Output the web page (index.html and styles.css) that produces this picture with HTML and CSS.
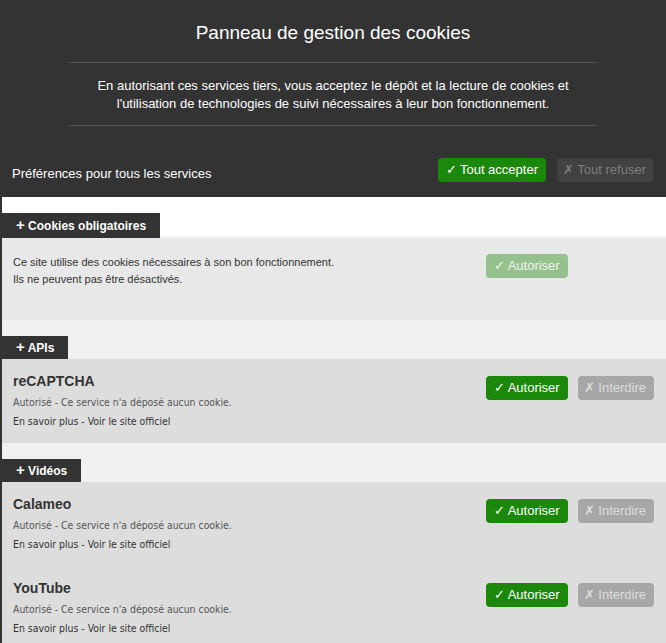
FILE: index.html
```html
<!DOCTYPE html>
<html lang="fr">
<head>
<meta charset="utf-8">
<title>Panneau de gestion des cookies</title>
<link rel="stylesheet" href="styles.css">
</head>
<body>
<div class="panel">
  <header class="top">
    <h1 class="title">Panneau de gestion des cookies</h1>
    <hr class="rule">
    <p class="intro">En autorisant ces services tiers, vous acceptez le dépôt et la lecture de cookies et l'utilisation de technologies de suivi nécessaires à leur bon fonctionnement.</p>
    <hr class="rule rule-bottom">
    <div class="prefs">
      <span class="prefs-label">Préférences pour tous les services</span>
      <div class="actions">
        <button class="btn btn-allow">✓ Tout accepter</button>
        <button class="btn btn-deny-dark">✗ Tout refuser</button>
      </div>
    </div>
  </header>

  <div class="services">
    <section class="category">
      <div class="cat-head cat-head-first"><span class="cat-title"><span class="plus">+</span> Cookies obligatoires</span></div>
      <div class="mandatory">
        <p class="mandatory-text">Ce site utilise des cookies nécessaires à son bon fonctionnement.<br>Ils ne peuvent pas être désactivés.</p>
        <div class="actions row-actions">
          <button class="btn btn-allow faded">✓ Autoriser</button>
          <button class="btn btn-deny hidden">✗ Interdire</button>
        </div>
      </div>
    </section>

    <section class="category">
      <div class="cat-head"><span class="cat-title"><span class="plus">+</span> APIs</span></div>
      <div class="service">
        <div class="service-info">
          <div class="service-name">reCAPTCHA</div>
          <div class="service-status">Autorisé - Ce service n'a déposé aucun cookie.</div>
          <div class="service-links">En savoir plus - Voir le site officiel</div>
        </div>
        <div class="actions row-actions">
          <button class="btn btn-allow">✓ Autoriser</button>
          <button class="btn btn-deny">✗ Interdire</button>
        </div>
      </div>
    </section>

    <section class="category">
      <div class="cat-head"><span class="cat-title"><span class="plus">+</span> Vidéos</span></div>
      <div class="service">
        <div class="service-info">
          <div class="service-name">Calameo</div>
          <div class="service-status">Autorisé - Ce service n'a déposé aucun cookie.</div>
          <div class="service-links">En savoir plus - Voir le site officiel</div>
        </div>
        <div class="actions row-actions">
          <button class="btn btn-allow">✓ Autoriser</button>
          <button class="btn btn-deny">✗ Interdire</button>
        </div>
      </div>
      <div class="service">
        <div class="service-info">
          <div class="service-name">YouTube</div>
          <div class="service-status">Autorisé - Ce service n'a déposé aucun cookie.</div>
          <div class="service-links">En savoir plus - Voir le site officiel</div>
        </div>
        <div class="actions row-actions">
          <button class="btn btn-allow">✓ Autoriser</button>
          <button class="btn btn-deny">✗ Interdire</button>
        </div>
      </div>
    </section>
  </div>
</div>
</body>
</html>
```

FILE: styles.css
```css
html, body {
  margin: 0;
  padding: 0;
  background: #ffffff;
}

body {
  font-family: "Liberation Sans", Arial, sans-serif;
  color: #333;
  overflow: hidden;
}

.panel {
  display: flex;
  flex-direction: column;
  width: 666px;
}

.top {
  background: #333333;
  color: #ffffff;
  display: flex;
  flex-direction: column;
  align-items: center;
  padding: 21px 0 15px;
}

.title {
  margin: 0;
  font-size: 19px;
  font-weight: normal;
  line-height: 24px;
  color: #ffffff;
}

.rule {
  width: 528px;
  height: 1px;
  border: 0;
  margin: 17px 0 0;
  background: #555555;
}

.rule-bottom {
  margin-top: 0;
}

.intro {
  margin: 14px 0 12px;
  width: 520px;
  text-align: center;
  font-size: 13px;
  line-height: 18px;
  color: #ffffff;
}

.prefs {
  align-self: stretch;
  display: flex;
  justify-content: space-between;
  align-items: flex-start;
  margin-top: 32px;
  padding: 0 13px 0 12px;
}

.prefs-label {
  font-size: 13px;
  line-height: 16px;
  margin-top: 8px;
}

.actions {
  display: flex;
  gap: 11px;
}

.btn {
  font-family: "Liberation Sans", Arial, sans-serif;
  font-size: 13px;
  line-height: 24px;
  height: 24px;
  padding: 0 8px;
  border: 0;
  border-radius: 4px;
  color: #ffffff;
  white-space: nowrap;
  cursor: pointer;
}

.btn-allow {
  background: #1b870b;
  color: #ffffff;
}

.btn-deny-dark {
  background: #414141;
  color: #7e7e7e;
  padding: 0 7px 0 6px;
}

.btn-deny {
  background: #a7a7a7;
  color: #dedede;
  padding: 0 8px 0 6px;
}

.faded {
  background: #96c18f;
  color: #eef5ec;
}

.hidden {
  visibility: hidden;
}

.services {
  display: flex;
  flex-direction: column;
  border-left: 2px solid #333333;
}

.category {
  display: flex;
  flex-direction: column;
}

.cat-head {
  background: #f0f0f0;
  padding-top: 16px;
  display: flex;
}

.cat-head-first {
  background: #ffffff;
  padding-top: 16px;
  box-shadow: inset 0 -2px 0 #f3f3f3;
}

.cat-title {
  background: #333333;
  color: #ffffff;
  font-weight: bold;
  font-size: 12px;
  line-height: 22px;
  padding: 0 14px 0 16px;
  margin-left: -2px;
}

.cat-head-first .cat-title {
  line-height: 23px;
}

.plus {
  font-size: 15px;
}

.mandatory {
  background: #e8e8e8;
  display: flex;
  justify-content: space-between;
  align-items: flex-start;
  padding: 16px 12px 32px 11px;
}

.mandatory-text {
  margin: 0;
  font-size: 11px;
  line-height: 17px;
  color: #333;
}

.row-actions {
  gap: 10px;
}

.service {
  background: #dddddd;
  display: flex;
  justify-content: space-between;
  align-items: flex-start;
  padding: 13px 12px 15px 11px;
}

.service .row-actions {
  margin-top: 4px;
}

.service-info {
  display: flex;
  flex-direction: column;
}

.service-name {
  font-size: 14px;
  font-weight: bold;
  line-height: 18px;
  color: #333;
}

.service-status {
  font-family: "DejaVu Sans Condensed", "DejaVu Sans", sans-serif;
  font-size: 10.4px;
  line-height: 14px;
  margin-top: 5px;
  color: #555;
}

.service-links {
  font-family: "DejaVu Sans Condensed", "DejaVu Sans", sans-serif;
  font-size: 10.4px;
  line-height: 14px;
  margin-top: 5px;
  color: #333;
}
```
